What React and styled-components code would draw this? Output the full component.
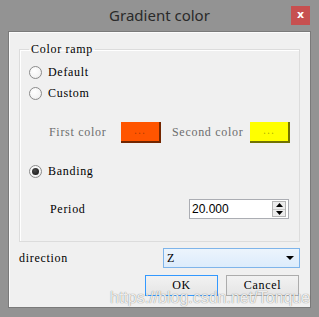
import React from 'react';
import styled, { createGlobalStyle } from 'styled-components';

const GlobalStyle = createGlobalStyle`
  html, body {
    margin: 0;
    padding: 0;
    background: #939393;
  }
`;

const dialogFont = `"Liberation Serif", "Times New Roman", serif`;

const Window = styled.div`
  position: relative;
  width: 319px;
  height: 317px;
  box-sizing: border-box;
  background: #939393;
  padding: 0 8px 9px 8px;
  display: flex;
  flex-direction: column;
  overflow: hidden;
`;

const TitleBar = styled.div`
  height: 31px;
  display: grid;
  grid-template-columns: 1fr auto 1fr;
  align-items: start;
  margin: 0 -8px;
`;

const Title = styled.div`
  grid-column: 2;
  font-family: "Noto Sans", "Open Sans", sans-serif;
  font-size: 15px;
  line-height: 20px;
  margin-top: 5px;
  color: #2a2a2a;
`;

const CloseButton = styled.div`
  grid-column: 3;
  justify-self: end;
  margin: 6px 9px 0 0;
  width: 19px;
  height: 19px;
  background: #c75050;
  color: #fff;
  font-family: "DejaVu Sans", sans-serif;
  font-weight: bold;
  font-size: 11px;
  line-height: 18px;
  text-align: center;
`;

const Client = styled.div`
  flex: 1;
  background: #f0f0f0;
  border: 1px solid #7a7a7a;
  box-shadow: inset 1px 1px 0 #fcfcfc;
  padding: 0 10px;
  display: flex;
  flex-direction: column;
  font-family: ${dialogFont};
  font-size: 12px;
  letter-spacing: 0.7px;
  color: #000;
`;

const Group = styled.fieldset`
  margin: 9px 0 0 0;
  padding: 0 0 22px 0;
  border: 1px solid #dcdcdc;
  box-shadow: inset 1px 1px 0 #fff;
  display: flex;
  flex-direction: column;
  min-width: 0;
`;

const Legend = styled.legend`
  margin-left: 9px;
  padding: 0 2px;
  line-height: 16px;
`;

const Row = styled.div`
  display: flex;
  align-items: center;
  height: ${p => p.$h || 20}px;
  margin-top: ${p => p.$top || 0}px;
  padding-left: ${p => p.$left || 9}px;
`;

const RadioCircle = styled.span`
  width: 13px;
  height: 13px;
  box-sizing: border-box;
  border-radius: 50%;
  border: 1px solid #8b8b8b;
  background: radial-gradient(circle at 40% 35%, #ffffff 0%, #f4f4f4 60%, #e2e2e2 100%);
  display: flex;
  align-items: center;
  justify-content: center;
  margin-right: 6px;
  flex: none;

  &::after {
    content: '';
    display: ${p => (p.$checked ? 'block' : 'none')};
    width: 7px;
    height: 7px;
    border-radius: 50%;
    background: radial-gradient(circle at 40% 35%, #4a4a4a, #111);
  }
`;

const Label = styled.span`
  color: ${p => (p.$disabled ? '#6d6d6d' : '#000')};
  width: ${p => (p.$w ? `${p.$w}px` : 'auto')};
  flex: none;
  white-space: pre;
`;

const ColorButton = styled.div`
  width: 40px;
  height: 21px;
  box-sizing: border-box;
  background: ${p => p.$color};
  border-right: 2px solid rgba(0, 0, 0, 0.55);
  border-bottom: 2px solid rgba(0, 0, 0, 0.55);
  color: rgba(0, 0, 0, 0.3);
  text-align: center;
  line-height: 17px;
  letter-spacing: 1px;
  margin-right: ${p => p.$gap || 0}px;
  flex: none;
`;

const SpinBox = styled.div`
  margin-left: auto;
  margin-right: 10px;
  width: 100px;
  height: 20px;
  box-sizing: border-box;
  border: 1px solid #abadb3;
  background: #fff;
  display: flex;
  align-items: center;
`;

const SpinValue = styled.span`
  flex: 1;
  padding-left: 2px;
  font-family: "Liberation Sans", Arial, sans-serif;
  font-size: 12px;
  letter-spacing: 0;
  color: #000;
`;

const SpinButtons = styled.div`
  width: 14px;
  height: 16px;
  margin-right: 2px;
  display: flex;
  flex-direction: column;
  border: 1px solid #b5b5b5;
  box-sizing: border-box;
`;

const SpinHalf = styled.div`
  flex: 1;
  background: #ececec;
  display: flex;
  align-items: center;
  justify-content: center;
  border-top: ${p => (p.$down ? '1px solid #c9c9c9' : 'none')};
`;

const DirectionRow = styled.div`
  display: flex;
  align-items: center;
  margin-top: 6px;
  height: 20px;
`;

const Combo = styled.div`
  margin-left: auto;
  width: 137px;
  height: 20px;
  box-sizing: border-box;
  border: 1px solid #7eb4ea;
  background: linear-gradient(#ecf4fc, #dcecfc);
  display: flex;
  align-items: center;
  padding: 0 5px 0 3px;
`;

const ComboText = styled.span`
  flex: 1;
`;

const ButtonRow = styled.div`
  display: flex;
  justify-content: flex-end;
  gap: 8px;
  margin-top: 7px;
  padding-right: 1px;
`;

const Button = styled.div`
  width: 73px;
  height: 21px;
  box-sizing: border-box;
  border: 1px solid ${p => (p.$default ? '#3399ff' : '#acacac')};
  background: linear-gradient(#f2f2f2, #e5e5e5);
  text-align: center;
  line-height: 19px;
`;

const Watermark = styled.div`
  position: absolute;
  left: 110px;
  top: 288px;
  font-family: "Liberation Sans", Arial, sans-serif;
  font-size: 16px;
  line-height: 20px;
  color: rgba(255, 255, 255, 0.9);
  text-shadow: 0 0 1px rgba(0, 0, 0, 0.6);
  white-space: nowrap;
  pointer-events: none;
`;

const Triangle = ({ dir = 'down', w = 7, h = 4 }) => (
  <svg width={w} height={h} viewBox={`0 0 ${w} ${h}`}>
    {dir === 'down'
      ? <polygon points={`0,0 ${w},0 ${w / 2},${h}`} fill="#000" />
      : <polygon points={`0,${h} ${w},${h} ${w / 2},0`} fill="#000" />}
  </svg>
);

const App = () => (
  <Window>
    <GlobalStyle />
    <TitleBar>
      <Title>Gradient color</Title>
      <CloseButton>x</CloseButton>
    </TitleBar>
    <Client>
      <Group>
        <Legend>Color ramp</Legend>
        <Row $top={5}>
          <RadioCircle />
          <Label>Default</Label>
        </Row>
        <Row $top={1}>
          <RadioCircle />
          <Label>Custom</Label>
        </Row>
        <Row $top={19} $h={21} $left={29}>
          <Label $disabled $w={72}>First color</Label>
          <ColorButton $color="#ff5500" $gap={11}>...</ColorButton>
          <Label $disabled $w={78}>Second color</Label>
          <ColorButton $color="#ffff00">...</ColorButton>
        </Row>
        <Row $top={18}>
          <RadioCircle $checked />
          <Label>Banding</Label>
        </Row>
        <Row $top={18} $left={30}>
          <Label>Period</Label>
          <SpinBox>
            <SpinValue>20.000</SpinValue>
            <SpinButtons>
              <SpinHalf><Triangle dir="up" w={7} h={4} /></SpinHalf>
              <SpinHalf $down><Triangle w={7} h={4} /></SpinHalf>
            </SpinButtons>
          </SpinBox>
        </Row>
      </Group>
      <DirectionRow>
        <Label>direction</Label>
        <Combo>
          <ComboText>Z</ComboText>
          <Triangle w={8} h={4} />
        </Combo>
      </DirectionRow>
      <ButtonRow>
        <Button $default>OK</Button>
        <Button>Cancel</Button>
      </ButtonRow>
    </Client>
    <Watermark>https://blog.csdn.net/Tonque</Watermark>
  </Window>
);

export default App;
